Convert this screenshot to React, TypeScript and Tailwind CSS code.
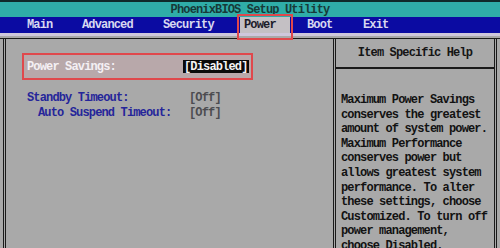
const tabs = [
  { label: 'Main', w: 'w-[55px]' },
  { label: 'Advanced', w: 'w-[81px]' },
  { label: 'Security', w: 'w-[77px]' },
];

const help = [
  'Maximum Power Savings',
  'conserves the greatest',
  'amount of system power.',
  'Maximum Performance',
  'conserves power but',
  'allows greatest system',
  'performance. To alter',
  'these settings, choose',
  'Customized. To turn off',
  'power management,',
  'choose Disabled.',
];

export default function App() {
  return (
    <div className="w-[500px] h-[248px] overflow-hidden bg-[#a9a9a9] font-['Liberation_Mono',monospace] text-[12px] tracking-[-0.85px] flex flex-col">
      {/* title */}
      <div className="h-[17px] shrink-0 bg-[#2fada8] border-t-2 border-[#0f2a2a] flex items-center justify-center text-[#173a38] font-bold">
        PhoenixBIOS Setup Utility
      </div>

      {/* menu */}
      <div className="relative h-[16px] shrink-0 bg-[#0b0ba2] flex items-center text-[#d8d8f0] font-bold">
        <div className="w-[27px]" />
        {tabs.map((t) => (
          <div key={t.label} className={t.w}>
            {t.label}
          </div>
        ))}
        <div className="w-[50px] h-full bg-[#c4c0c4] text-[#1c1c2a] flex items-center pl-[4px]">Power</div>
        <div className="w-[17px]" />
        <div className="w-[56px]">Boot</div>
        <div>Exit</div>
        <div className="absolute left-[237px] top-[-3px] w-[56px] h-[26px] border-2 border-[#e0484c]" />
      </div>
      <div className="h-[3px] shrink-0 bg-[#cfc8dc]" />
      <div className="h-[2px] shrink-0" />

      {/* body */}
      <div className="flex-1 flex border-t border-[#1a1a1a]">
        <div className="ml-[3px] w-[330px] border-l-[3px] border-double border-[#1a1a1a] pt-[14px]">
          <div className="ml-[16px] w-[231px] h-[27px] border-2 border-[#e0484c] bg-[#b8a8aa] flex items-center font-bold">
            <span className="pl-[3px] w-[159px] text-[#f4f0f4]">Power Savings:</span>
            <span className="bg-[#0a0a0a] text-[#f4f4f4] px-[1px] h-[13px] flex items-center">[Disabled]</span>
          </div>
          <div className="mt-[11px] ml-[21px] leading-[14.5px] font-bold">
            <div className="flex">
              <span className="w-[162px] text-[#25259a]">Standby Timeout:</span>
              <span className="text-[#4c4c50]">[Off]</span>
            </div>
            <div className="flex">
              <span className="w-[162px] pl-[11px] text-[#25259a]">Auto Suspend Timeout:</span>
              <span className="text-[#4c4c50]">[Off]</span>
            </div>
          </div>
        </div>

        <div className="w-[164px] border-x-[3px] border-double border-[#1a1a1a] flex flex-col">
          <div className="h-[30px] flex items-center justify-center text-[#151515] font-bold border-b-2 border-b-[#1a1a1a]">
            Item Specific Help
          </div>
          <div className="pt-[24px] pl-[5px] leading-[14.6px] text-[#121212] font-bold whitespace-nowrap">
            {help.map((l) => (
              <div key={l}>{l}</div>
            ))}
          </div>
        </div>
      </div>
    </div>
  );
}
